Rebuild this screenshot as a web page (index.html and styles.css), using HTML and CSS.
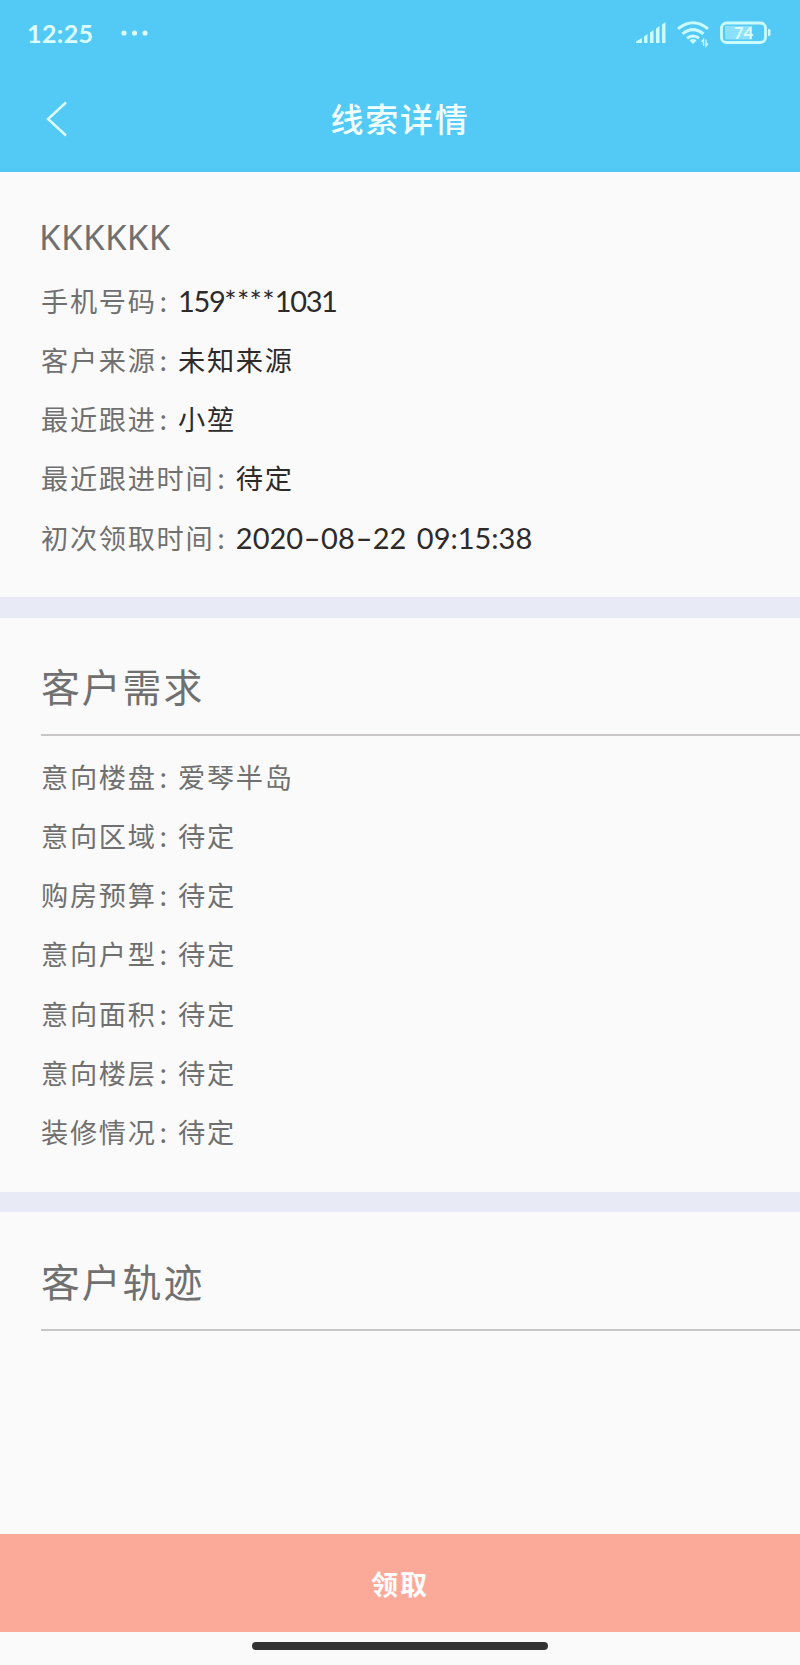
FILE: index.html
```html
<!DOCTYPE html>
<html lang="zh-CN">
<head>
    <meta charset="UTF-8">
    <meta name="viewport" content="width=device-width, initial-scale=1.0">
    <title>线索详情</title>
    <link rel="stylesheet" href="styles.css">
</head>
<body>
    <header class="header">
        <div class="status-bar">
            <span class="time">12:25</span>
            <svg class="dots" width="28" height="6" viewBox="0 0 28 6" fill="#dcffff">
                <circle cx="3" cy="3" r="2.6"/>
                <circle cx="13.5" cy="3" r="2.6"/>
                <circle cx="24" cy="3" r="2.6"/>
            </svg>
            <svg class="status-icons" width="138" height="28" viewBox="0 0 138 28">
                <!-- signal -->
                <g fill="#c9fbff">
                    <path d="M0 23V21.5L6 18V23Z"/>
                    <path d="M8 23V16.5L11.5 14V23Z"/>
                    <path d="M14 23V12.5L17.5 10V23Z"/>
                    <path d="M20 23V8.5L23.5 6V23Z"/>
                    <path d="M26 23V4.5L29.5 2V23Z"/>
                </g>
                <!-- wifi -->
                <g fill="none" stroke="#c9fbff" stroke-width="3">
                    <path d="M42 8.8Q57 -3.4 72 8.8"/>
                    <path d="M46.5 13.8Q57 5.4 67.5 13.8"/>
                    <path d="M51 18.3Q57 13.8 63 18.3"/>
                </g>
                <path d="M53.5 20.5Q57 17.6 60.500 20.5L57 24Z" fill="#c9fbff"/>
                <g fill="none" stroke="#c9fbff" stroke-width="1.4">
                    <path d="M67.5 26V19.5L65.5 22M70 19.5V26L72 23.5"/>
                </g>
                <!-- battery -->
                <rect x="85.5" y="3" width="44" height="19.5" rx="5" fill="none" stroke="#c9fbff" stroke-width="2.8"/>
                <path d="M89 6H116V19.500H89Z" fill="#8be0fb"/>
                <path d="M132 9H133Q134.500 9 134.500 10.500V14.500Q134.500 16 133 16H132Z" fill="#c9fbff"/>
                <text class="battery-text" x="107.5" y="19" text-anchor="middle">74</text>
            </svg>
        </div>
        <div class="nav-bar">
            <svg class="back" width="22" height="36" viewBox="0 0 22 36" fill="none" stroke="#dcffff" stroke-width="2.4">
                <path d="M20 1.5L2 18L20 34.5"/>
            </svg>
            <h1 class="title">线索详情</h1>
        </div>
    </header>

    <main class="content">
        <section class="section customer">
            <h2 class="name">KKKKKK</h2>
            <p class="row"><span class="label">手机号码</span><span class="colon">:</span><span class="value phone">159<span class="stars">****</span>1031</span></p>
            <p class="row"><span class="label">客户来源</span><span class="colon">:</span><span class="value">未知来源</span></p>
            <p class="row"><span class="label">最近跟进</span><span class="colon">:</span><span class="value">小堃</span></p>
            <p class="row"><span class="label">最近跟进时间</span><span class="colon">:</span><span class="value">待定</span></p>
            <p class="row"><span class="label">初次领取时间</span><span class="colon">:</span><span class="value date">2020<span class="dash">-</span>08<span class="dash">-</span>22 09:15:38</span></p>
        </section>

        <section class="section demand">
            <h2 class="section-title">客户需求</h2>
            <p class="row"><span class="label">意向楼盘</span><span class="colon">:</span><span>爱琴半岛</span></p>
            <p class="row"><span class="label">意向区域</span><span class="colon">:</span><span>待定</span></p>
            <p class="row"><span class="label">购房预算</span><span class="colon">:</span><span>待定</span></p>
            <p class="row"><span class="label">意向户型</span><span class="colon">:</span><span>待定</span></p>
            <p class="row"><span class="label">意向面积</span><span class="colon">:</span><span>待定</span></p>
            <p class="row"><span class="label">意向楼层</span><span class="colon">:</span><span>待定</span></p>
            <p class="row"><span class="label">装修情况</span><span class="colon">:</span><span>待定</span></p>
        </section>

        <section class="section track">
            <h2 class="section-title">客户轨迹</h2>
        </section>
    </main>

    <footer class="footer">
        <button class="claim-btn">领取</button>
        <div class="home-bar"></div>
    </footer>
</body>
</html>
```
FILE: styles.css
```css
* {
    box-sizing: border-box;
    margin: 0;
    padding: 0;
}
body {
    height: 1665px;
    display: flex;
    flex-direction: column;
    font-family: 'Noto Sans CJK SC', sans-serif;
    background-color: #fafafa;
    color: #707070;
    overflow: hidden;
}

/* Header */
.header {
    height: 172px;
    background-color: #53caf5;
}
.status-bar {
    height: 66px;
    display: flex;
    align-items: center;
    padding: 0 26px 0 27px;
}
.time {
    width: 94px;
    padding-bottom: 1px;
    font-family: 'Lato', sans-serif;
    font-size: 25px;
    font-weight: bold;
    letter-spacing: 0.4px;
    color: #dcffff;
}
.status-icons {
    margin-left: auto;
    margin-top: 2px;
}
.battery-text {
    font-family: 'Lato', sans-serif;
    font-size: 17px;
    font-weight: bold;
    fill: #dcffff;
}
.nav-bar {
    height: 106px;
    display: grid;
    grid-template-columns: 70px 1fr 70px;
    align-items: center;
}
.back {
    margin-left: 46px;
}
.title {
    padding-bottom: 2px;
    font-size: 33px;
    font-weight: 500;
    letter-spacing: 1.8px;
    text-align: center;
    color: #f0ffff;
}

/* Content */
.content {
    flex: 1;
}
.section {
    padding-left: 41px;
}
.customer {
    height: 446px;
    padding-top: 35.5px;
    border-bottom: 21px solid #e8eaf6;
}
.demand {
    height: 594px;
    border-bottom: 20px solid #e8eaf6;
}
.track {
    padding-top: 1px;
}
.name {
    height: 63px;
    line-height: 57px;
    font-family: 'Noto Sans', sans-serif;
    font-size: 35px;
    font-weight: 400;
    letter-spacing: 0.3px;
    margin-left: -2px;
}
.section-title {
    height: 118px;
    margin-bottom: 10.5px;
    line-height: 134px;
    border-bottom: 2px solid #c8c6c6;
    font-size: 38.8px;
    font-weight: 400;
    letter-spacing: 2px;
}
.row {
    display: flex;
    height: 59.25px;
    line-height: 59.25px;
    font-size: 27.2px;
    letter-spacing: 1.7px;
    white-space: nowrap;
}
.colon {
    width: 21.5px;
    padding-left: 3px;
    line-height: 58px;
}
.value {
    color: #2e2a2a;
}
.phone,
.date {
    font-family: 'Lato', sans-serif;
    font-size: 29px;
    letter-spacing: 0;
}
.phone {
    letter-spacing: -1.4px;
}
.stars {
    letter-spacing: 0.3px;
}
.date {
    word-spacing: 3px;
}
.dash {
    display: inline-block;
    width: 18px;
    text-align: center;
    transform: scaleX(1.6);
}

/* Footer */
.claim-btn {
    display: block;
    width: 100%;
    height: 98px;
    border: none;
    background-color: #fbaa99;
    font-family: inherit;
    font-size: 27px;
    font-weight: 700;
    letter-spacing: 1.9px;
    color: #fff;
}
.home-bar {
    width: 296px;
    height: 8px;
    margin: 10px auto 15px;
    border-radius: 4px;
    background-color: #333;
}
```
